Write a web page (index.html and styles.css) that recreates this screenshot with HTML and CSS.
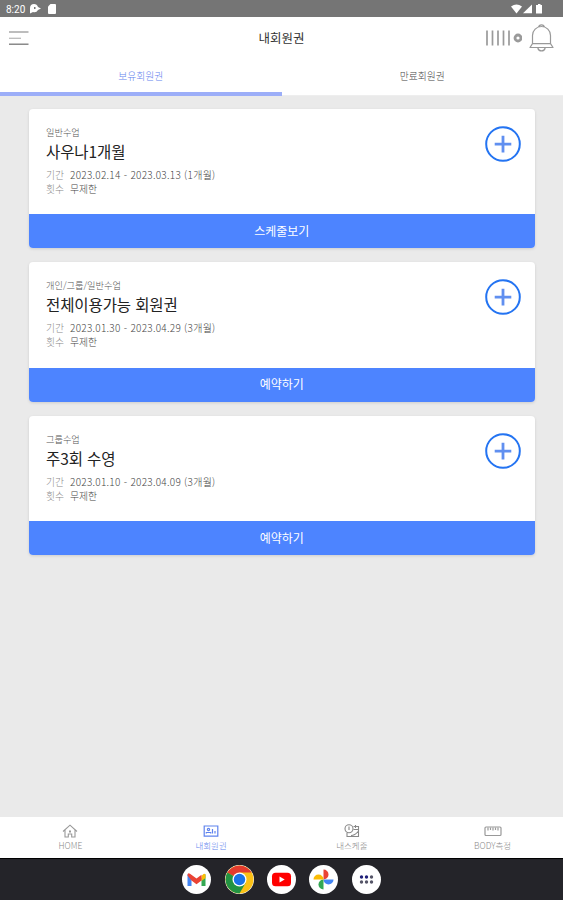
FILE: index.html
```
<!DOCTYPE html>
<html lang="ko">
<head>
  <meta charset="UTF-8">
  <meta name="viewport" content="width=device-width, initial-scale=1">
  <title>내회원권</title>
  <link rel="stylesheet" href="styles.css">
</head>
<body>
  <!-- 상태바 -->
  <div class="status-bar">
    <span class="time">8:20</span>
    <svg class="status-left" width="30" height="12" viewBox="0 0 30 12" fill="#fff">
      <path fill-rule="evenodd" d="M5 1a4.2 4.2 0 0 1 4 3l3 1.500-3 1.500a4.200 4.200 0 0 1-5 2L1 10.500V5a4.200 4.200 0 0 1 4-4zM5 4v2h1.500V4z"/>
      <path d="M21.500 1H26q1 0 1 1v8q0 1-1 1h-6q-1 0-1-1V3.500z"/>
    </svg>
    <svg class="status-right" width="34" height="12" viewBox="0 0 34 12" fill="#fff">
      <path d="M0 3.500Q5.500-.5 11 3.500L5.500 10.500z"/>
      <path d="M21 1.500v8.700h-9z"/>
      <path d="M27 1h2.500v1H31v8.500h-6V2h2z"/>
    </svg>
  </div>

  <!-- 헤더 -->
  <header class="header">
    <svg class="menu-icon" width="20" height="16" viewBox="0 0 20 16" fill="none" stroke-width="1.300">
      <path d="M0 2h19.500" stroke="#999"/>
      <path d="M0 8.300h12" stroke="#bbb"/>
      <path d="M0 14.200h19.500" stroke="#777"/>
    </svg>
    <h1 class="title">내회원권</h1>
    <div class="header-icons">
      <svg width="37" height="18" viewBox="0 0 37 18" fill="none" stroke="#9a9a9a">
        <path d="M2 1.500v15M7.500 1.500v15M13 1.500v15M18.500 1.500v15M24 1.500v15" stroke-width="1.700"/>
        <circle cx="33" cy="9" r="3" stroke-width="2.800"/>
      </svg>
      <svg width="25" height="29" viewBox="0 0 25 29" fill="none" stroke="#999" stroke-width="1.200" stroke-linejoin="round">
        <path d="M9.800 3.500a2.700 2.700 0 0 1 5.400 0M3.500 20V11.500a9 9 0 0 1 18 0V20M3.500 19.700h18M3.500 19.700L1 23.500h23L21.500 19.700M8.800 24a3.800 3.800 0 0 0 7.400 0"/>
      </svg>
    </div>
  </header>

  <nav class="tabs">
    <a class="tab active">보유회원권</a>
    <a class="tab">만료회원권</a>
  </nav>

  <!-- 회원권 목록 -->
  <main class="list">
    <section class="card">
      <div class="card-body">
        <p class="kind">일반수업</p>
        <h2 class="name">사우나1개월</h2>
        <p class="info"><span class="label">기간</span><span class="date">2023.02.14 - 2023.03.13 (1개월)</span></p>
        <p class="info"><span class="label">횟수</span><span>무제한</span></p>
        <svg class="plus" width="36" height="36" viewBox="0 0 36 36" fill="none">
          <circle cx="18" cy="18" r="16.800" stroke="#2474f2" stroke-width="2"/>
          <path d="M18 9.800v16.600M9.700 18.100h16.600" stroke="#608ff0" stroke-width="2.800"/>
        </svg>
      </div>
      <button class="card-button">스케줄보기</button>
    </section>

    <section class="card">
      <div class="card-body">
        <p class="kind">개인/그룹/일반수업</p>
        <h2 class="name">전체이용가능 회원권</h2>
        <p class="info"><span class="label">기간</span><span class="date">2023.01.30 - 2023.04.29 (3개월)</span></p>
        <p class="info"><span class="label">횟수</span><span>무제한</span></p>
        <svg class="plus" width="36" height="36" viewBox="0 0 36 36" fill="none">
          <circle cx="18" cy="18" r="16.800" stroke="#2474f2" stroke-width="2"/>
          <path d="M18 9.800v16.600M9.700 18.100h16.600" stroke="#608ff0" stroke-width="2.800"/>
        </svg>
      </div>
      <button class="card-button">예약하기</button>
    </section>

    <section class="card">
      <div class="card-body">
        <p class="kind">그룹수업</p>
        <h2 class="name">주3회 수영</h2>
        <p class="info"><span class="label">기간</span><span class="date">2023.01.10 - 2023.04.09 (3개월)</span></p>
        <p class="info"><span class="label">횟수</span><span>무제한</span></p>
        <svg class="plus" width="36" height="36" viewBox="0 0 36 36" fill="none">
          <circle cx="18" cy="18" r="16.800" stroke="#2474f2" stroke-width="2"/>
          <path d="M18 9.800v16.600M9.700 18.100h16.600" stroke="#608ff0" stroke-width="2.800"/>
        </svg>
      </div>
      <button class="card-button">예약하기</button>
    </section>
  </main>

  <!-- 하단 메뉴 -->
  <nav class="bottom-nav">
    <a class="nav-item">
      <svg width="18" height="14" viewBox="0 0 18 14" fill="none" stroke="#999" stroke-width="1.100">
        <path d="M2 7.500L9 1.200 16 7.500M4 6v7h3.300V10h3.400v3H14V6"/>
        <path d="M8 7.500h2" stroke-width="1.800"/>
      </svg>
      <span>HOME</span>
    </a>
    <a class="nav-item active">
      <svg width="18" height="14" viewBox="0 0 18 14" fill="none" stroke="#5f83ee" stroke-width="1.200">
        <path d="M2.200 2h13.600v10.200H2.200z"/>
        <circle cx="6.500" cy="5.500" r="1.100"/>
        <path d="M4.300 9.500V8.500h4.400v1M10.500 5v4.500M13 7v2.500"/>
      </svg>
      <span>내회원권</span>
    </a>
    <a class="nav-item">
      <svg width="18" height="14" viewBox="0 0 18 14" fill="none" stroke="#888" stroke-width="1.100">
        <circle cx="6" cy="4.700" r="4"/>
        <path d="M6 2.500V6M10.500 2.500h5v10H4V9M12.500 1v3M10.500 5.500h5M8 11.500q4 0 7-4"/>
      </svg>
      <span>내스케줄</span>
    </a>
    <a class="nav-item">
      <svg width="18" height="14" viewBox="0 0 18 14" fill="none" stroke="#999" stroke-width="1.200">
        <rect x="1" y="3" width="16" height="8.500" rx="1"/>
        <path d="M4 3.500v3M6.500 3.500v2.500M9 3.500v3M11.500 3.500v2.500M14 3.500v3"/>
      </svg>
      <span>BODY측정</span>
    </a>
  </nav>

  <!-- 앱 독 -->
  <footer class="dock">
    <svg class="app" viewBox="0 0 29 29">
      <path d="M5.500 9v12h4v-8z" fill="#4285f4"/>
      <path d="M23.500 9v12h-4v-8z" fill="#34a853"/>
      <path d="M19.500 11l2-2q2-.8 2 1.500v2.500l-4 3z" fill="#fbbc04"/>
      <path d="M5.500 10.500q0-3 2.500-1.800L14.500 13.500 19.500 9.800v5.700l-5 3.700-5-3.700z" fill="#ea4335"/>
    </svg>
    <svg class="app" viewBox="0 0 29 29">
      <circle cx="14.500" cy="14.500" r="14" fill="#fbc116"/>
      <path d="M14.500 14.500L2.380 7.500A14 14 0 0 1 26.620 7.500H14.500z" fill="#e33b2e"/>
      <path d="M2.380 7.500A14 14 0 0 0 14.500 28.500L20.560 18 14.500 14.500z" fill="#229342"/>
      <circle cx="14.500" cy="14.500" r="7" fill="#fff"/>
      <circle cx="14.500" cy="14.500" r="5.700" fill="#1a73e8"/>
    </svg>
    <svg class="app" viewBox="0 0 29 29">
      <rect x="5" y="7.700" width="19" height="13.600" rx="3.500" fill="#f00"/>
      <path d="M12.500 11.500v6l5.200-3z" fill="#fff"/>
    </svg>
    <svg class="app" viewBox="0 0 29 29">
      <path d="M14.500 14.500V4.500a5 5 0 0 1 0 10z" fill="#ea4335"/>
      <path d="M14.500 14.500h10a5 5 0 0 1-10 0z" fill="#4285f4"/>
      <path d="M14.500 14.500v10a5 5 0 0 1 0-10z" fill="#34a853"/>
      <path d="M14.500 14.500h-10a5 5 0 0 1 10 0z" fill="#fbbc04"/>
    </svg>
    <svg class="app" viewBox="0 0 29 29">
      <g fill="#20207a">
        <circle cx="9.500" cy="12" r="1.700"/><circle cx="14.500" cy="12" r="1.700"/><circle cx="19.500" cy="12" r="1.700" fill="#555568"/>
      </g>
      <g fill="#555568">
        <circle cx="9.500" cy="17" r="1.700"/><circle cx="14.500" cy="17" r="1.700"/><circle cx="19.500" cy="17" r="1.700"/>
      </g>
    </svg>
  </footer>
</body>
</html>
```
FILE: styles.css
```
* {
  box-sizing: border-box;
}

body {
  margin: 0;
  height: 900px;
  display: flex;
  flex-direction: column;
  background-color: #eaeaea;
  font-family: "Noto Sans CJK KR", sans-serif;
  font-weight: 300;
  color: #333;
  overflow: hidden;
}

h1, h2, p {
  margin: 0;
}

/* 상태바 */
.status-bar {
  display: flex;
  align-items: center;
  height: 17px;
  padding: 1px 18px 0 6px;
  background-color: #757575;
  color: #fff;
}

.time {
  width: 23px;
  font-family: Roboto, sans-serif;
  font-size: 10px;
  font-weight: 400;
}

.status-right {
  margin-left: auto;
}

/* 헤더 */
.header {
  display: grid;
  grid-template-columns: 1fr auto 1fr;
  align-items: center;
  height: 42px;
  padding: 0 9px;
  background-color: #fff;
}

.title {
  font-size: 12.5px;
  font-weight: 400;
  line-height: 18px;
}

.header-icons {
  display: flex;
  align-items: center;
  justify-content: flex-end;
  gap: 7px;
}

/* 탭 */
.tabs {
  display: flex;
  height: 37px;
  background-color: #fff;
  border-bottom: 1px solid #eee;
}

.tab {
  flex: 1;
  height: 37px;
  border-bottom: 4px solid transparent;
  font-size: 9.8px;
  line-height: 35px;
  text-align: center;
  color: #444;
}

.tab.active {
  color: #6484ee;
  border-bottom-color: #9caef8;
}

/* 회원권 카드 */
.list {
  flex: 1;
  display: flex;
  flex-direction: column;
  gap: 14px;
  padding: 13px 28px 0 28.5px;
}

.card {
  height: 139.400px;
  border-radius: 4px;
  background-color: #fff;
  box-shadow: 0 1px 3px rgba(0, 0, 0, 0.12);
  overflow: hidden;
}

.card-body {
  position: relative;
  height: 105.400px;
  padding: 16px 17.5px 0;
}

.kind {
  font-size: 9.2px;
  line-height: 14px;
  color: #555;
}

.name {
  margin-bottom: 5px;
  font-size: 15.5px;
  font-weight: 400;
  line-height: 24px;
  letter-spacing: -0.1px;
  color: #222;
}

.info {
  display: flex;
  font-size: 9.8px;
  line-height: 14px;
  color: #444;
}

.date {
  font-size: 10px;
  letter-spacing: 0.28px;
}

.label {
  width: 24px;
  color: #888;
}

.plus {
  position: absolute;
  top: 17px;
  right: 14px;
}

.card-button {
  display: block;
  width: 100%;
  height: 34px;
  padding: 0 0 2px;
  border: 0;
  background-color: #4d84ff;
  color: #fff;
  font-family: inherit;
  font-size: 12px;
  font-weight: 400;
}

/* 하단 메뉴 */
.bottom-nav {
  display: flex;
  height: 41px;
  background-color: #fff;
}

.nav-item {
  flex: 1;
  display: flex;
  flex-direction: column;
  align-items: center;
  padding-top: 7px;
  font-size: 8.5px;
  line-height: 15px;
  color: #888;
}

.nav-item.active {
  color: #5f83ee;
}

/* 앱 독 */
.dock {
  display: flex;
  justify-content: center;
  align-items: center;
  gap: 13.3px;
  height: 42px;
  border-top: 1px solid #000;
  background-color: #242429;
}

.app {
  width: 29px;
  height: 29px;
  border-radius: 50%;
  background-color: #fff;
}
```
